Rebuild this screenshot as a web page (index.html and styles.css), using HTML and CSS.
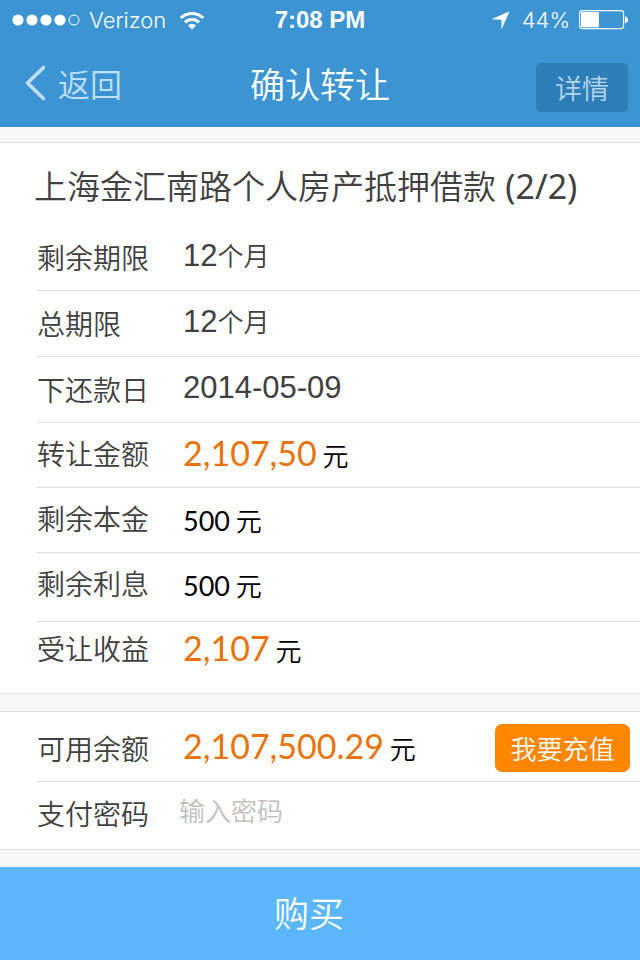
FILE: index.html
```html
<!DOCTYPE html>
<html lang="zh-CN">
<head>
<meta charset="utf-8">
<meta name="viewport" content="width=device-width, initial-scale=1">
<title>确认转让</title>
<link rel="stylesheet" href="styles.css">
</head>
<body>
<header class="top">
  <div class="status">
    <div class="status-left">
      <svg class="signal" width="68" height="12" viewBox="0 0 68 12" aria-hidden="true">
        <g fill="#fff"><circle cx="6" cy="6" r="5.6"/><circle cx="20" cy="6" r="5.6"/><circle cx="34" cy="6" r="5.6"/><circle cx="48" cy="6" r="5.6"/></g>
        <circle cx="62" cy="6" r="5" fill="none" stroke="#fff"/>
      </svg>
      <span class="carrier">Verizon</span>
      <svg class="wifi" width="26" height="19" viewBox="0 0 26 19" aria-hidden="true">
        <g fill="none" stroke="#fff" stroke-width="3"><path d="M1.800 7a16 16 0 0 1 22.400 0"/><path d="M6 11.400a10 10 0 0 1 14 0"/></g>
        <path d="M13 18.600l-4-4.200a5.800 5.800 0 0 1 8 0z" fill="#fff"/>
      </svg>
    </div>
    <span class="clock">7:08 PM</span>
    <div class="status-right">
      <svg width="19" height="19" viewBox="0 0 19 19" aria-hidden="true"><path d="M18.600.3L10.500 18.600V8.700L.4 8.300z" fill="#fff"/></svg>
      <span class="percent">44%</span>
      <svg width="49" height="20" viewBox="0 0 49 20" aria-hidden="true">
        <rect x=".6" y=".6" width="44" height="18" rx="2.500" fill="none" stroke="#fff" stroke-width="1.100"/>
        <rect x="2" y="2" width="18" height="15.200" rx="1" fill="#fff"/>
        <path d="M46 6.200c4 .6 4 6.400 0 7z" fill="#fff"/>
      </svg>
    </div>
  </div>
  <nav class="nav">
    <a class="back" href="#">
      <svg width="20" height="36" viewBox="0 0 20 36" aria-hidden="true"><path d="M18.500 2.500L2.500 18l16 15.500" fill="none" stroke="currentColor" stroke-width="3.600" stroke-linecap="round" stroke-linejoin="round"/></svg>
      <span>返回</span>
    </a>
    <h1 class="page-title">确认转让</h1>
    <button class="detail" type="button">详情</button>
  </nav>
</header>

<main>
  <section class="panel">
    <h2 class="loan">上海金汇南路个人房产抵押借款 <span class="part">(2/2)</span></h2>
    <dl class="rows">
      <div class="row term"><dt>剩余期限</dt><dd><span class="num">12</span>个月</dd></div>
      <div class="row term"><dt>总期限</dt><dd><span class="num">12</span>个月</dd></div>
      <div class="row term"><dt>下还款日</dt><dd><span class="num">2014-05-09</span></dd></div>
      <div class="row amount"><dt>转让金额</dt><dd><span class="money">2,107,50</span> 元</dd></div>
      <div class="row amount"><dt>剩余本金</dt><dd><span class="plain">500</span> 元</dd></div>
      <div class="row amount interest"><dt>剩余利息</dt><dd><span class="plain">500</span> 元</dd></div>
      <div class="row amount total"><dt>受让收益</dt><dd><span class="money">2,107</span> 元</dd></div>
    </dl>
  </section>

  <form class="panel" id="pay">
    <div class="row balance">
      <span class="label">可用余额</span>
      <span class="value"><span class="money">2,107,500.29</span> 元</span>
      <button class="recharge" type="button">我要充值</button>
    </div>
    <div class="row password">
      <label class="label" for="password">支付密码</label>
      <input id="password" type="password" placeholder="输入密码">
    </div>
  </form>
</main>

<button class="buy" type="submit" form="pay">购买</button>
</body>
</html>
```
FILE: styles.css
```css
* {
  box-sizing: border-box;
}

body {
  margin: 0;
  min-height: 100vh;
  display: flex;
  flex-direction: column;
  background: #f7f7f7;
  color: #404040;
  font-family: "Noto Sans CJK SC", sans-serif;
  font-weight: 350;
}

button,
input {
  font: inherit;
  border: 0;
  padding: 0;
}

h1,
h2,
dl,
dd {
  margin: 0;
  font-weight: inherit;
}

/* Header */
.top {
  background: #3c94d3;
  color: #fff;
}

.status {
  height: 40px;
  display: grid;
  grid-template-columns: 1fr auto 1fr;
  align-items: center;
  padding: 0 12px;
  font-family: Inter, "Liberation Sans", sans-serif;
  font-size: 22px;
  font-weight: 300;
}

.status-left,
.status-right {
  display: flex;
  align-items: center;
  gap: 9px;
}

.wifi {
  margin-left: 4px;
}

.status-right {
  justify-content: flex-end;
}

.percent {
  margin-left: 3px;
}

.clock {
  font-family: "Liberation Sans", sans-serif;
  font-size: 24px;
  font-weight: 700;
}

.nav {
  height: 87px;
  display: grid;
  grid-template-columns: 1fr auto 1fr;
  align-items: center;
  padding: 0 12px 2px 25px;
}

.back {
  display: flex;
  align-items: center;
  gap: 13px;
  color: #c0e0f8;
  font-size: 32px;
  line-height: 40px;
  text-decoration: none;
}

.page-title {
  font-size: 35px;
  line-height: 48px;
  margin-right: 13px;
}

.detail {
  justify-self: end;
  width: 92px;
  height: 49px;
  margin-top: 10px;
  border-radius: 5px;
  background: #2e7eb8;
  color: #b4d4ec;
  font-size: 27px;
  line-height: 49px;
}

/* Panels */
.panel {
  margin-top: 15px;
  background: #fff;
  border-top: 1px solid #e0e0e0;
  border-bottom: 1px solid #e0e0e0;
}

.panel + .panel {
  margin-top: 17px;
}

.loan {
  padding: 18px 34px 16px;
  font-size: 33px;
  line-height: 48px;
}

.part {
  margin-left: 2px;
  font-family: "Noto Sans", sans-serif;
  font-size: 34px;
  font-weight: 400;
  line-height: 1;
}

.row {
  display: flex;
  align-items: flex-start;
  margin-left: 37px;
  border-bottom: 1px solid #e0e0e0;
}

.row:last-child {
  border-bottom: 0;
}

dt,
.label {
  flex: 0 0 146px;
  font-size: 28px;
  line-height: 40px;
}

dd,
.value {
  flex: 1;
  font-size: 26px;
  white-space: nowrap;
}

.term {
  padding: 12px 0 13px;
}

.term dd {
  line-height: 36px;
}

.amount {
  padding: 10px 0;
}

.amount dd {
  color: #000;
  line-height: 44px;
}

.interest {
  padding-bottom: 14px;
}

.total {
  padding: 6px 0 21px;
}

.num,
.money,
.plain {
  line-height: 1;
}

.num {
  font-family: "Liberation Sans", sans-serif;
  font-size: 31px;
}

.money {
  color: #e8730c;
  font-family: Lato, sans-serif;
  font-size: 34px;
  font-weight: 400;
}

.plain {
  font-family: Lato, sans-serif;
  font-size: 27px;
  font-weight: 400;
}

.balance {
  align-items: center;
  padding: 12px 10px 9px 0;
}

.value {
  color: #000;
  line-height: 44px;
}

.recharge {
  width: 135px;
  height: 48px;
  border-radius: 7px;
  background: #ff8600;
  color: #fff;
  font-size: 26px;
  line-height: 48px;
}

.password {
  padding: 11px 10px 16px 0;
}

.password input {
  flex: 1;
  min-width: 0;
  height: 34px;
  margin-left: -4px;
  background: transparent;
  color: #404040;
  font-size: 26px;
  line-height: 34px;
  outline: 0;
}

.password input::placeholder {
  color: #c0c0c0;
  opacity: 1;
}

.buy {
  min-height: 93px;
  margin-top: auto;
  padding: 0 22px 4px 0;
  background: #5bb7f9;
  color: #fff;
  font-size: 35px;
}
```
